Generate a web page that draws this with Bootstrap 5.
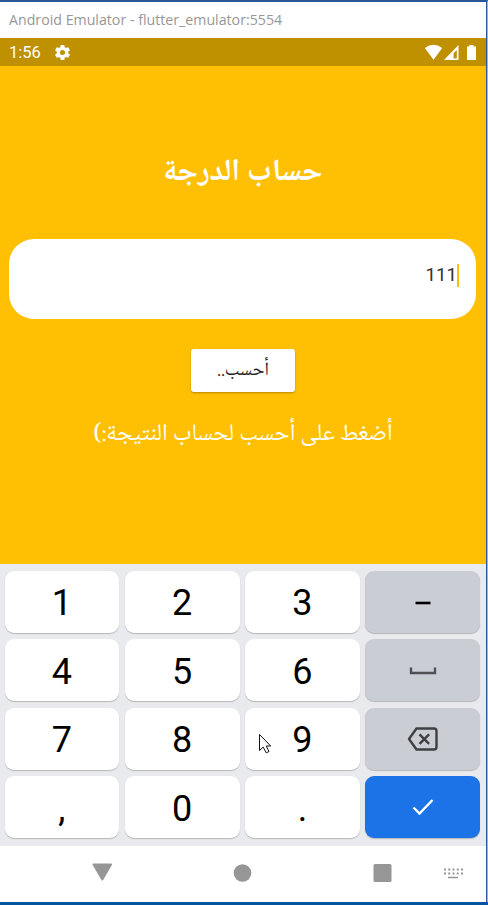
<!DOCTYPE html>
<html lang="ar">
<head>
<meta charset="utf-8">
<meta name="viewport" content="width=device-width, initial-scale=1">
<title>Android Emulator</title>
<link href="https://cdn.jsdelivr.net/npm/bootstrap@5.3.0/dist/css/bootstrap.min.css" rel="stylesheet">
<style>
body{width:488px;height:905px;overflow:hidden;background:#fff;font-family:Roboto,"DejaVu Sans",sans-serif}
svg{display:block;flex:none}
.emu{width:488px;height:905px;border-top:2px solid #2b5797;border-right:1px solid #a9b3c4}
.emu-in{border-right:1px solid #2b5797}
.titlebar{height:36px;padding-left:9px;font:14.2px/36px "Open Sans","Noto Sans",sans-serif;color:#979797;white-space:nowrap}
.status{height:28px;background:#bf9000;color:#fff;padding:1px 9px 0;font-size:16.5px}
.clock{padding-top:2px}
.gear{margin-left:12px}
.app{height:498px;background:#ffc003;color:#fff}
.ar{font-family:"Noto Naskh Arabic","Noto Sans Arabic","DejaVu Sans",sans-serif;white-space:nowrap}
.ar span{display:inline-block}
.heading{height:40px;margin-top:88px;font-size:31px;line-height:40px;font-weight:700}
.field{width:467px;height:80px;margin:45px 10px 0 0;border-radius:25px;background:#fff;color:#333;padding:25px 17px 0 0;font-size:18.7px;line-height:23px}
.caret{width:2px;height:23px;background:#ffc003}
.calc{width:104px;height:43px;margin-top:30px;border-radius:3px;border:0;background:#fff;color:#222;box-shadow:0 1px 2px rgba(120,80,0,.5);font-size:18.8px;line-height:40px}
.hint{height:36px;margin-top:25px;font-size:23.8px;line-height:36px}
.keys{height:282px;background:#e8eaed;padding:7px 6px 8px 4.5px;display:grid;grid-template-columns:repeat(4,1fr);grid-template-rows:repeat(4,1fr);gap:6.5px 5.5px;direction:ltr}
.key{border-radius:9px;background:#fff;color:#000;font-size:36px;line-height:1;box-shadow:0 1px 1px #b4b6ba;padding:3px 0 0 0;border:0}
.key.side{background:#cbcdd4;padding:0}
.key.go{background:#1c73e8;padding:0}
.nav-bar{height:56px;background:#fff}
.desk{height:3px;width:488px;background:#0655a0}
.pointer{position:absolute;left:258px;top:733px}
</style>
<script src="https://cdn.jsdelivr.net/npm/bootstrap@5.3.0/dist/js/bootstrap.bundle.min.js"></script>
</head>
<body>
<div class="emu"><div class="emu-in">
  <div class="titlebar">Android Emulator - flutter_emulator:5554</div>
  <div class="status d-flex align-items-center">
    <span class="clock">1:56</span>
    <svg class="gear" width="19" height="19" viewBox="0 0 24 24" fill="#fff"><path d="M19.14 12.94c.04-.3.06-.61.06-.94s-.02-.64-.07-.94l2.03-1.58c.18-.14.23-.41.12-.61l-1.92-3.32c-.12-.22-.37-.29-.59-.22l-2.39.96c-.5-.38-1.03-.7-1.62-.94L14.4 2.81A.48.48 0 0 0 13.92 2.4h-3.84c-.24 0-.43.17-.47.41l-.36 2.54c-.59.24-1.13.57-1.62.94l-2.39-.96c-.22-.08-.47 0-.59.22L2.74 8.87c-.12.21-.08.47.12.61l2.03 1.58c-.05.3-.09.63-.09.94s.02.64.07.94l-2.03 1.58c-.18.14-.23.41-.12.61l1.92 3.32c.12.22.37.29.59.22l2.39-.96c.5.38 1.03.7 1.62.94l.36 2.54c.05.24.24.41.48.41h3.84c.24 0 .44-.17.47-.41l.36-2.54c.59-.24 1.13-.56 1.62-.94l2.39.96c.22.08.47 0 .59-.22l1.92-3.32c.12-.22.07-.47-.12-.61zM12 15.2a3.2 3.2 0 1 1 0-6.4 3.2 3.2 0 0 1 0 6.4z"/></svg>
    <svg class="ms-auto" width="53" height="18" viewBox="424 43 53 18" fill="#fff"><path d="M424.8 47q8.7-6.5 17.4 0l-8.7 11.7z"/><path d="M458.5 44v15H444zM456.8 49l-3.2 3.2V57.5h3.2z" fill-rule="evenodd"/><path d="M467 45.5h2.3V44h4.200v1.500h2.500V59h-9z"/></svg>
  </div>
  <main class="app d-flex flex-column" dir="rtl">
    <div class="heading ar text-center"><span>حساب الدرجة</span></div>
    <div class="field d-flex align-items-start" dir="ltr"><span class="ms-auto">111</span><i class="caret"></i></div>
    <button class="calc ar align-self-center p-0"><span>أحسب..</span></button>
    <div class="hint ar text-center"><span>أضغط على أحسب لحساب النتيجة:)</span></div>
  </main>
  <div class="keys">
    <button class="key">1</button><button class="key">2</button><button class="key">3</button>
    <button class="key side d-flex align-items-center justify-content-center"><svg width="30" height="20"><path d="M7.5 11h15" stroke="#000" stroke-width="2.6"/></svg></button>
    <button class="key">4</button><button class="key">5</button><button class="key">6</button>
    <button class="key side d-flex align-items-center justify-content-center"><svg width="28" height="10"><path d="M2 2.500v5.500h24V2.500" fill="none" stroke="#505154" stroke-width="2.4"/></svg></button>
    <button class="key">7</button><button class="key">8</button><button class="key">9</button>
    <button class="key side d-flex align-items-center justify-content-center"><svg width="32" height="26" fill="none" stroke="#3f4043" stroke-width="2.4"><path d="M9.5 2.5H27q2.5 0 2.5 2.5V21q0 2.5-2.5 2.5H9.5L2 13z" stroke-linejoin="round"/><path d="M12.5 8.3l9.6 9.6M22.1 8.3l-9.6 9.6"/></svg></button>
    <button class="key">,</button><button class="key">0</button><button class="key">.</button>
    <button class="key go d-flex align-items-center justify-content-center"><svg width="22" height="18"><path d="M1.5 9.5l6 6L20.5 2" fill="none" stroke="#fff" stroke-width="2.4"/></svg></button>
  </div>
  <div class="nav-bar"><svg width="486" height="56" viewBox="0 846 486 56" fill="#969696"><path d="M93.5 864.5h17.5l-8.7 15z" stroke="#969696" stroke-width="2" stroke-linejoin="round"/><circle cx="242.5" cy="873" r="8.8"/><rect x="373.5" y="864" width="18" height="18" rx="1.5"/><path d="M444 869.5h19M444 873.5h19" stroke="#969696" stroke-width="2" stroke-dasharray="2 2.25"/><path d="M448 877.5h10" stroke="#969696" stroke-width="1.5"/></svg></div>
</div>
<div class="desk"></div>
</div>
<svg class="pointer" width="14" height="22"><path d="M1.5 1.5v16l3.700-3.400 3 5.700 2.800-1.300-2.800-5.500h4.500z" fill="#fff" stroke="#111" stroke-width="1"/></svg>
</body>
</html>
